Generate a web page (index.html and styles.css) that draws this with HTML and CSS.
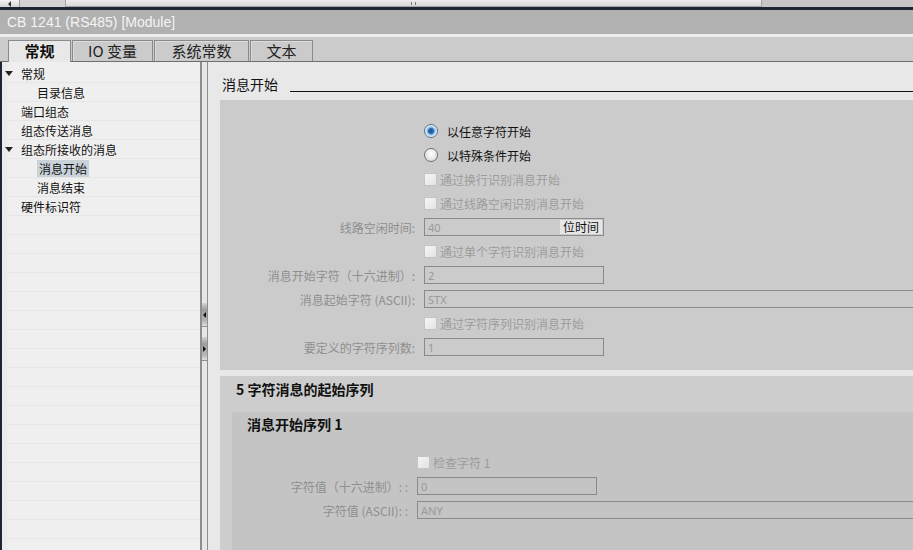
FILE: index.html
```html
<!DOCTYPE html>
<html lang="zh">

<head>
    <meta charset="UTF-8">
    <meta name="viewport" content="width=device-width, initial-scale=1.0">
    <title>CB 1241 (RS485) [Module]</title>
    <link rel="stylesheet" href="styles.css">
</head>

<body>
    <div class="hscroll">
        <span class="hs-btn"><span class="arrow-left"></span></span>
        <span class="hs-gap"></span>
        <span class="hs-thumb"><span class="grip"></span></span>
        <span class="hs-track"></span>
    </div>
    <div class="darkline"></div>
    <div class="titlebar">CB 1241 (RS485) [Module]</div>
    <div class="titlesep"></div>

    <div class="tabstrip">
        <div class="tab active" style="width: 63px">常规</div>
        <div class="tab" style="width: 81px">IO 变量</div>
        <div class="tab" style="width: 95px">系统常数</div>
        <div class="tab" style="width: 63px">文本</div>
    </div>

    <div class="main">
        <div class="edge"></div>

        <ul class="tree">
            <li class="node"><span class="toggle"><span class="tri"></span></span>常规</li>
            <li class="node child">目录信息</li>
            <li class="node"><span class="toggle"></span>端口组态</li>
            <li class="node"><span class="toggle"></span>组态传送消息</li>
            <li class="node"><span class="toggle"><span class="tri"></span></span>组态所接收的消息</li>
            <li class="node child"><span class="selected">消息开始</span></li>
            <li class="node child">消息结束</li>
            <li class="node"><span class="toggle"></span>硬件标识符</li>
        </ul>

        <div class="splitter">
            <div class="handle"><span class="tri-left"></span></div>
            <div class="handle"><span class="tri-right"></span></div>
        </div>

        <div class="content">
            <div class="sec-head">
                <span class="sec-title">消息开始</span>
                <span class="rule"></span>
            </div>

            <div class="panel">
                <div class="form">
                    <span></span>
                    <label class="opt"><span class="radio on"></span>以任意字符开始</label>

                    <span></span>
                    <label class="opt"><span class="radio"></span>以特殊条件开始</label>

                    <span></span>
                    <label class="opt disabled"><span class="check"></span>通过换行识别消息开始</label>

                    <span></span>
                    <label class="opt disabled"><span class="check"></span>通过线路空闲识别消息开始</label>

                    <span class="lbl">线路空闲时间:</span>
                    <div class="field short"><span>40</span><span class="unit">位时间</span></div>

                    <span></span>
                    <label class="opt disabled"><span class="check"></span>通过单个字符识别消息开始</label>

                    <span class="lbl">消息开始字符（十六进制）:</span>
                    <div class="field short"><span>2</span></div>

                    <span class="lbl">消息起始字符 (ASCII):</span>
                    <div class="field wide"><span>STX</span></div>

                    <span></span>
                    <label class="opt disabled"><span class="check"></span>通过字符序列识别消息开始</label>

                    <span class="lbl">要定义的字符序列数:</span>
                    <div class="field short"><span>1</span></div>
                </div>
            </div>

            <div class="panel2">
                <div class="p2-head">5 字符消息的起始序列</div>
                <div class="inner">
                    <div class="inner-head">消息开始序列 1</div>
                    <div class="form form2">
                        <span></span>
                        <label class="opt disabled"><span class="check"></span>检查字符 1</label>

                        <span class="lbl">字符值（十六进制）: :</span>
                        <div class="field short"><span>0</span></div>

                        <span class="lbl">字符值 (ASCII): :</span>
                        <div class="field wide"><span>ANY</span></div>
                    </div>
                </div>
            </div>
        </div>
    </div>
</body>

</html>
```

FILE: styles.css
```css
* {
    box-sizing: border-box;
}

body {
    margin: 0;
    height: 550px;
    overflow: hidden;
    background-color: #e8e8e8;
    font-family: "Noto Sans CJK SC", "Noto Sans", sans-serif;
    font-size: 12px;
    color: #111;
}

/* window scrollbar remnant at the very top */
.hscroll {
    height: 7px;
    display: flex;
    background-color: #d2d2d2;
}

.hs-btn {
    width: 20px;
    background: linear-gradient(#f4f4f4, #d4d4d4);
    border-right: 1px solid #9a9a9a;
    display: flex;
    align-items: center;
    justify-content: center;
}

.arrow-left {
    width: 0;
    height: 0;
    border-top: 3px solid transparent;
    border-bottom: 3px solid transparent;
    border-right: 3px solid #333;
}

.hs-gap {
    width: 45px;
}

.hs-thumb {
    width: 697px;
    background: linear-gradient(#ececec, #d8d8d8);
    border: 1px solid #a4a4a4;
    border-top: none;
    display: flex;
    justify-content: center;
    align-items: center;
}

.grip {
    width: 5px;
    height: 3px;
    border-left: 1px solid #777;
    border-right: 1px solid #777;
}

.hs-track {
    flex: 1;
    background-color: #c6c6c6;
}

.darkline {
    height: 3px;
    background-color: #1e2632;
}

.titlebar {
    height: 24px;
    line-height: 24px;
    padding-left: 7px;
    background-color: #b1b1b1;
    color: #f4f4f4;
    font-family: "Liberation Sans", Arial, sans-serif;
    font-size: 14px;
}

.titlesep {
    height: 3px;
    background-color: #ececec;
}

/* tabs */
.tabstrip {
    height: 25px;
    display: flex;
    gap: 1px;
    padding: 3px 0 0 8px;
    background-color: #cbcbcb;
    border-bottom: 1px solid #6e6e6e;
}

.tab {
    height: 21px;
    border: 1px solid #8a8a8a;
    border-bottom: none;
    box-shadow: inset 1px 1px 0 #dcdcdc;
    text-align: center;
    font-size: 15px;
    line-height: 20px;
    color: #222;
}

.tab.active {
    height: 22px;
    margin-bottom: -1px;
    background-color: #e8e8e8;
    box-shadow: none;
    font-weight: bold;
    color: #111;
}

/* main area */
.main {
    height: 488px;
    display: flex;
}

.edge {
    width: 2px;
    background-color: #1e2632;
}

.tree {
    width: 198px;
    margin: 0;
    padding: 2px 0 0 0;
    list-style: none;
    background-color: #efefef;
    background-image: repeating-linear-gradient(to bottom, transparent 0, transparent 18px, #e6e6e6 18px, #e6e6e6 19px);
    background-position: 0 2px;
    box-shadow: inset 5px 0 0 #ebebeb;
}

.node {
    height: 19px;
    display: flex;
    align-items: center;
    line-height: 19px;
}

.toggle {
    width: 19px;
    display: flex;
    justify-content: center;
    padding-right: 5px;
}

.tri {
    width: 0;
    height: 0;
    border-left: 4px solid transparent;
    border-right: 4px solid transparent;
    border-top: 5px solid #222;
}

.child {
    padding-left: 35px;
}

.selected {
    background-color: #c9d1d9;
    padding: 0 2px;
    line-height: 17px;
}

.splitter {
    width: 8px;
    border-left: 2px solid #8e8e8e;
    border-right: 1px solid #8e8e8e;
    background-color: #e6e6e6;
    display: flex;
    flex-direction: column;
    gap: 10px;
    padding-top: 241px;
}

.handle {
    height: 24px;
    background: linear-gradient(#d4d4d4, #9c9c9c 30%, #b8b8b8 80%, #e0e0e0);
    border-bottom: 1px solid #8e8e8e;
    display: flex;
    align-items: center;
    justify-content: center;
}

.tri-left {
    width: 0;
    height: 0;
    border-top: 3px solid transparent;
    border-bottom: 3px solid transparent;
    border-right: 3px solid #111;
}

.tri-right {
    width: 0;
    height: 0;
    border-top: 3px solid transparent;
    border-bottom: 3px solid transparent;
    border-left: 3px solid #111;
}

/* content */
.content {
    flex: 1;
    min-width: 0;
    display: flex;
    flex-direction: column;
    overflow: hidden;
}

.sec-head {
    height: 38px;
    flex-shrink: 0;
    display: flex;
    align-items: center;
    padding: 6px 0 0 14px;
}

.sec-title {
    font-size: 14px;
    line-height: 20px;
    color: #111;
}

.rule {
    flex: 1;
    height: 1px;
    margin: 14px 0 0 12px;
    background-color: #111;
}

.panel {
    flex-shrink: 0;
    margin-left: 12px;
    padding: 19px 0 11px 0;
    background-color: #cbcbcb;
}

.form {
    display: grid;
    grid-template-columns: 195px 1fr;
    grid-auto-rows: 24px;
    column-gap: 9px;
    align-items: center;
}

.form2 {
    grid-template-columns: 176px 1fr;
    margin-top: 13px;
}

.lbl {
    text-align: right;
    color: #8f8f8f;
    white-space: nowrap;
}

.opt {
    display: flex;
    align-items: center;
    gap: 9px;
    color: #111;
}

.opt.disabled {
    gap: 3px;
    color: #9c9c9c;
}

.radio {
    width: 14px;
    height: 14px;
    border-radius: 50%;
    border: 1px solid #6f6f6f;
    background: radial-gradient(circle at 50% 40%, #ffffff, #d2d2d2);
}

.radio.on {
    border-color: #5a6f86;
    background: radial-gradient(circle, #1f4f8e 0, #2d69b0 2.5px, #7fb3e4 3.5px, #cfe3f5 5px, #eef4fa 6px);
}

.check {
    width: 13px;
    height: 13px;
    border: 1px solid #c4c4c4;
    background: linear-gradient(135deg, #f6f6f6, #e2e2e2);
}

.field {
    height: 18px;
    display: flex;
    align-items: center;
    justify-content: space-between;
    padding: 0 1px 0 3px;
    border: 1px solid #8a8a8a;
    font-size: 11px;
    color: #9a9a9a;
    font-family: "Noto Sans", sans-serif;
}

.field.short {
    width: 180px;
}

.field.wide {
    margin-right: -6px;
}

.unit {
    height: 14px;
    line-height: 14px;
    padding: 0 3px;
    background-color: #e6e6e6;
    color: #111;
    font-family: "Noto Sans CJK SC", sans-serif;
    font-size: 12px;
}

.panel2 {
    flex: 1;
    display: flex;
    flex-direction: column;
    margin: 6px 0 0 12px;
    background-color: #cdcdcd;
}

.p2-head {
    height: 26px;
    line-height: 26px;
    padding-left: 16px;
    font-size: 14px;
    font-weight: bold;
    color: #111;
}

.inner {
    flex: 1;
    margin: 10px 0 0 12px;
    background-color: #c4c4c4;
}

.inner-head {
    height: 25px;
    line-height: 25px;
    padding-left: 15px;
    font-size: 14px;
    font-weight: bold;
    color: #111;
}
```
